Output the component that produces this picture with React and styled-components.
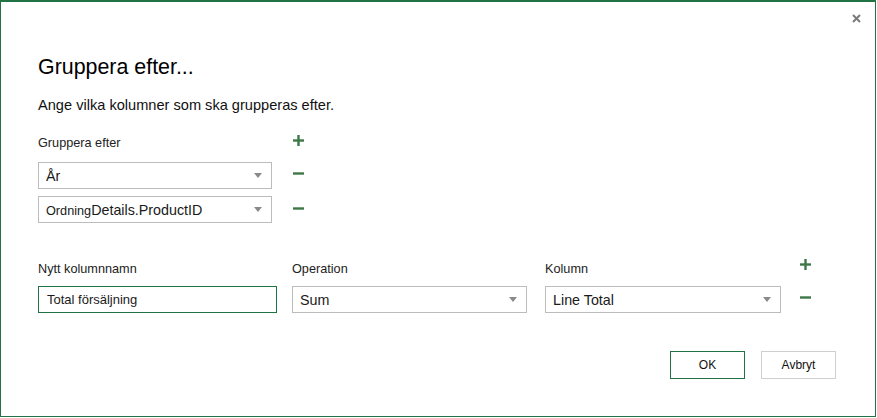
import React from "react";
import styled, { createGlobalStyle } from "styled-components";

const Global = createGlobalStyle`
  html, body { margin: 0; padding: 0; background: #fff; }
  body { font-family: "Liberation Sans", Arial, sans-serif; color: #1f1f1f; }
  * { box-sizing: border-box; }
`;

const Dialog = styled.div`
  position: relative;
  width: 876px;
  height: 417px;
  border: 1px solid #217346;
  border-top-width: 2px;
  background: #fff;
  display: flex;
  flex-direction: column;
  padding: 0 39px 0 37px;
`;

const CloseButton = styled.button`
  position: absolute;
  top: 10px;
  right: 13px;
  width: 12px;
  height: 12px;
  padding: 0;
  border: none;
  background: transparent;
  display: flex;
  align-items: center;
  justify-content: center;
  cursor: pointer;
`;

const Title = styled.h1`
  margin: 52px 0 0;
  font-size: 21.4px;
  line-height: 26px;
  font-weight: normal;
  color: #000;
`;

const Subtitle = styled.p`
  margin: 15px 0 0;
  font-size: 14.6px;
  line-height: 20px;
  color: #111;
`;

const Label = styled.div`
  font-size: 12.7px;
  line-height: 18px;
  color: #222;
`;

const GroupSection = styled.div`
  margin-top: 19px;
  display: grid;
  grid-template-columns: 234px 20px;
  column-gap: 20px;
  grid-auto-rows: auto;
  align-items: center;
`;

const IconButton = styled.button`
  width: 12px;
  height: 12px;
  padding: 0;
  border: none;
  background: transparent;
  display: flex;
  align-items: center;
  justify-content: center;
  cursor: pointer;
  margin-top: ${(p) => p.$offset || 0}px;
`;

const SelectBox = styled.div`
  height: 27px;
  border: 1px solid #bcbcbc;
  background: #fff;
  display: flex;
  align-items: center;
  padding: 0 7px 0 7px;
  font-size: 14.3px;
  color: #1a1a1a;
  margin-top: ${(p) => p.$mt || 0}px;
`;

const SelectValue = styled.span`
  flex: 1;
  white-space: nowrap;
  overflow: hidden;
`;

const Small = styled.span`
  font-size: 12.7px;
`;

const Arrow = styled.span`
  width: 0;
  height: 0;
  border-left: 4.5px solid transparent;
  border-right: 4.5px solid transparent;
  border-top: 5px solid #8a8a8a;
  margin-right: 2px;
`;

const TextInput = styled.div`
  height: 27px;
  border: 1px solid #217346;
  display: flex;
  align-items: center;
  padding: 0 8px;
  font-size: 13px;
  color: #1a1a1a;
`;

const AggSection = styled.div`
  margin-top: 37px;
  display: grid;
  grid-template-columns: 239px 235px 239px 14px;
  column-gap: 15px;
  row-gap: 8px;
  align-items: center;
`;

const AggCell = styled.div`
  margin-left: ${(p) => p.$ml || 0}px;
`;

const Footer = styled.div`
  margin-top: 38px;
  display: flex;
  justify-content: flex-end;
  gap: 16px;
`;

const Button = styled.button`
  width: 75px;
  height: 28px;
  background: #fff;
  border: 1px solid ${(p) => (p.$primary ? "#217346" : "#cfcfcf")};
  border-width: ${(p) => (p.$primary ? "1px" : "1.5px")};
  font-family: "Liberation Sans", Arial, sans-serif;
  font-size: 12px;
  color: #111;
  cursor: pointer;
`;

const green = "#3e7848";

const Plus = () => (
  <svg width="11" height="11" viewBox="0 0 11 11">
    <rect x="4.3" y="0" width="2.4" height="11" fill={green} />
    <rect x="0" y="4.3" width="11" height="2.4" fill={green} />
  </svg>
);

const Minus = () => (
  <svg width="11" height="3" viewBox="0 0 11 3">
    <rect x="0" y="0.3" width="11" height="2.4" fill={green} />
  </svg>
);

const CloseIcon = () => (
  <svg width="9" height="9" viewBox="0 0 9 9">
    <path d="M1 1 L8 8 M8 1 L1 8" stroke="#7a7a7a" strokeWidth="2" />
  </svg>
);

const Select = ({ children, mt }) => (
  <SelectBox $mt={mt}>
    <SelectValue>{children}</SelectValue>
    <Arrow />
  </SelectBox>
);

export default function App() {
  return (
    <>
      <Global />
      <Dialog>
        <CloseButton aria-label="Stäng">
          <CloseIcon />
        </CloseButton>
        <Title>Gruppera efter...</Title>
        <Subtitle>Ange vilka kolumner som ska grupperas efter.</Subtitle>

        <GroupSection>
          <Label>Gruppera efter</Label>
          <IconButton $offset={-5} aria-label="Lägg till">
            <Plus />
          </IconButton>
          <Select mt={10}>År</Select>
          <IconButton $offset={6} aria-label="Ta bort">
            <Minus />
          </IconButton>
          <Select mt={7}>
            <Small>Ordning</Small>Details.ProductID
          </Select>
          <IconButton $offset={4} aria-label="Ta bort">
            <Minus />
          </IconButton>
        </GroupSection>

        <AggSection>
          <Label>Nytt kolumnnamn</Label>
          <Label>Operation</Label>
          <AggCell $ml={3}>
            <Label>Kolumn</Label>
          </AggCell>
          <AggCell $ml={3}>
            <IconButton $offset={-9} aria-label="Lägg till">
              <Plus />
            </IconButton>
          </AggCell>
          <TextInput>Total försäljning</TextInput>
          <Select>Sum</Select>
          <AggCell $ml={3}>
            <Select>Line Total</Select>
          </AggCell>
          <AggCell $ml={3}>
            <IconButton $offset={-5} aria-label="Ta bort">
              <Minus />
            </IconButton>
          </AggCell>
        </AggSection>

        <Footer>
          <Button $primary>OK</Button>
          <Button>Avbryt</Button>
        </Footer>
      </Dialog>
    </>
  );
}
